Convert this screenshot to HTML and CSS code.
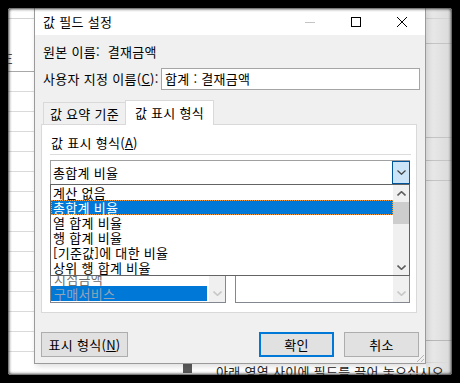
FILE: index.html
```html
<!DOCTYPE html>
<html lang="ko">
<head>
  <meta charset="UTF-8">
  <title>값 필드 설정</title>
  <link rel="stylesheet" href="styles.css">
</head>
<body>

<div class="screen">
  <span class="col-e">E</span>
  <div class="drop-hint"><span class="cell-mark"></span>아래 영역 사이에 필드를 끌어 놓으십시오.</div>

  <div class="dialog">
    <div class="titlebar">
      <span class="title">값 필드 설정</span>
      <div class="caption">
        <span class="cap-btn">
          <svg width="10" height="10" viewBox="0 0 10 10"><path d="M0 5.5H10" stroke="#c4c4c4" stroke-width="1"/></svg>
        </span>
        <span class="cap-btn">
          <svg width="10" height="10" viewBox="0 0 10 10"><rect x="0.5" y="0.5" width="9" height="9" fill="none" stroke="#000" stroke-width="1"/></svg>
        </span>
        <span class="cap-btn">
          <svg width="10" height="10" viewBox="0 0 10 10"><path d="M0 0L10 10M10 0L0 10" stroke="#000" stroke-width="1"/></svg>
        </span>
      </div>
    </div>

    <div class="body">
      <div class="row">원본 이름:&nbsp; 결재금액</div>

      <div class="row name-row">
        <span>사용자 지정 이름(<u>C</u>):</span>
        <div class="textbox">합계 : 결재금액</div>
      </div>

      <div class="tabs">
        <span class="tab">값 요약 기준</span>
        <span class="tab active">값 표시 형식</span>
      </div>

      <div class="panel">
        <div class="group-label">값 표시 형식(<u>A</u>)</div>
        <div class="rule"></div>

        <div class="combo">
          <span class="combo-value">총합계 비율</span>
          <span class="combo-btn">
            <svg width="9" height="5" viewBox="0 0 9 5"><path d="M0.5 0.5L4.5 4.3L8.5 0.5" fill="none" stroke="#444" stroke-width="1.2"/></svg>
          </span>

          <div class="droplist">
            <ul class="options">
              <li>계산 없음</li>
              <li class="selected">총합계 비율</li>
              <li>열 합계 비율</li>
              <li>행 합계 비율</li>
              <li>[기준값]에 대한 비율</li>
              <li>상위 행 합계 비율</li>
            </ul>
            <div class="vscroll">
              <span class="arrow">
                <svg width="9" height="5" viewBox="0 0 9 5"><path d="M0.5 4.5L4.5 0.7L8.5 4.5" fill="none" stroke="#606060" stroke-width="1.6"/></svg>
              </span>
              <div class="thumb"></div>
              <span class="arrow bottom">
                <svg width="9" height="5" viewBox="0 0 9 5"><path d="M0.5 0.5L4.5 4.3L8.5 0.5" fill="none" stroke="#606060" stroke-width="1.6"/></svg>
              </span>
            </div>
          </div>
        </div>

        <div class="lists">
          <div class="listbox left">
            <ul class="items">
              <li>지점금액</li>
              <li class="sel">구매서비스</li>
            </ul>
            <div class="vscroll off">
              <span class="arrow bottom">
                <svg width="9" height="5" viewBox="0 0 9 5"><path d="M0.5 0.5L4.5 4.3L8.5 0.5" fill="none" stroke="#c8c8c8" stroke-width="1.6"/></svg>
              </span>
            </div>
          </div>
          <div class="listbox">
            <ul class="items"></ul>
            <div class="vscroll off">
              <span class="arrow bottom">
                <svg width="9" height="5" viewBox="0 0 9 5"><path d="M0.5 0.5L4.5 4.3L8.5 0.5" fill="none" stroke="#c8c8c8" stroke-width="1.6"/></svg>
              </span>
            </div>
          </div>
        </div>
      </div>

      <div class="buttons">
        <button class="btn wide">표시 형식(<u>N</u>)</button>
        <button class="btn default">확인</button>
        <button class="btn">취소</button>
      </div>
    </div>

    <svg class="grip" width="10" height="10" viewBox="0 0 10 10">
      <path d="M9 2L2 9M9 6L6 9" stroke="#b5b5b5" stroke-width="1"/>
    </svg>
  </div>
</div>

</body>
</html>
```

FILE: styles.css
```css
* { box-sizing: border-box; }

body {
  margin: 0;
  background: #000;
  font-family: "Noto Sans CJK KR", "Noto Sans", sans-serif;
  font-size: 13px;
  letter-spacing: 0.3px;
  color: #000;
}

/* excel sheet behind the dialog */
.screen {
  position: relative;
  margin: 8px;
  width: 444px;
  height: 367px;
  overflow: hidden;
  border-radius: 3px;
  display: flex;
  flex-direction: column;
  background-color: #fff;
  background-image:
    linear-gradient(#d4d4d4, #d4d4d4),
    linear-gradient(#a8a8a8, #a8a8a8),
    repeating-linear-gradient(#fff 0, #fff 19px, #dadada 19px, #dadada 20px),
    linear-gradient(#c4c4c4, #c4c4c4),
    linear-gradient(#c4c4c4, #c4c4c4),
    linear-gradient(#c4c4c4, #c4c4c4),
    linear-gradient(#c4c4c4, #c4c4c4),
    linear-gradient(#b8b8b8, #b8b8b8),
    linear-gradient(to right, #ededed, #d9d9d9);
  background-size:
    444px 1px, 26px 1px, 26px 300px,
    26px 1px, 26px 1px, 26px 1px, 26px 1px, 26px 1px,
    26px 367px;
  background-position:
    0 10px, 0 63px, 0 44px,
    418px 35px, 418px 129px, 418px 152px, 418px 172px, 418px 332px,
    418px 0;
  background-repeat: no-repeat;
}

.screen::after {
  content: "";
  position: absolute;
  inset: 0;
  box-shadow: inset 0 0 3px 1px #333;
  border-radius: 3px;
  z-index: 20;
  pointer-events: none;
}

.col-e {
  margin: 44px 0 0 -3px;
  line-height: 14px;
  color: #444;
}

.drop-hint {
  margin: auto 0 0 170px;
  height: 13px;
  line-height: 17px;
  white-space: nowrap;
  color: #222;
  border-top: 1px solid #dadada;
}

.cell-mark {
  display: inline-block;
  width: 9px;
  height: 10px;
  background: #5a5a5a;
  margin: 0 24px 0 5px;
  vertical-align: top;
}

/* dialog */
.dialog {
  position: absolute;
  left: 26px;
  top: -1px;
  width: 392px;
  height: 357px;
  border: 1px solid #9a9a9a;
  background: #f0f0f0;
  z-index: 2;
  box-shadow: 2px 2px 6px rgba(0, 0, 0, 0.15);
}

.titlebar {
  height: 27px;
  background: #fff;
  display: flex;
  align-items: center;
}

.title {
  padding-left: 8px;
  line-height: 27px;
}

.caption {
  margin-left: auto;
  display: flex;
}

.cap-btn {
  width: 46px;
  height: 27px;
  display: flex;
  align-items: center;
  justify-content: center;
}

.body {
  padding: 0 6px;
}

.row {
  padding-left: 2px;
  margin-top: 8px;
  line-height: 18px;
  height: 18px;
}

.name-row {
  margin-top: 7px;
  height: 22px;
  display: flex;
  align-items: center;
  justify-content: space-between;
}

.textbox {
  width: 259px;
  height: 22px;
  margin-right: -1px;
  background: #fff;
  border: 1px solid #a5a5a5;
  padding-left: 3px;
  line-height: 20px;
}

.tabs {
  margin-top: 10px;
  padding-left: 2px;
  height: 24px;
  display: flex;
  align-items: flex-end;
  position: relative;
  z-index: 1;
}

.tab {
  width: 82px;
  height: 22px;
  line-height: 21px;
  text-align: center;
  border: 1px solid #d9d9d9;
  border-bottom: none;
  border-right: none;
}

.tab.active {
  width: 89px;
  height: 25px;
  margin-bottom: -1px;
  background: #fff;
  border-right: 1px solid #d9d9d9;
  line-height: 24px;
}

.panel {
  width: 376px;
  height: 189px;
  background: #fff;
  border: 1px solid #d9d9d9;
  padding: 10px 6px 0 8px;
}

.group-label {
  padding-left: 1px;
  line-height: 16px;
  height: 16px;
}

.rule {
  margin: 3px -1px 0 0;
  height: 1px;
  background: #dcdcdc;
}

.combo {
  position: relative;
  margin-top: 5px;
  height: 25px;
  border: 1px solid #a0a0a0;
  display: flex;
  align-items: center;
}

.combo-value {
  padding-left: 2px;
  line-height: 22px;
}

.combo-btn {
  margin-left: auto;
  margin-right: -1px;
  align-self: flex-start;
  width: 18px;
  height: 23px;
  background: #cce4f7;
  border: 1px solid #005499;
  display: flex;
  align-items: center;
  justify-content: center;
}

.droplist {
  position: absolute;
  left: -1px;
  right: -1px;
  top: 23px;
  height: 92px;
  background: #fff;
  border: 1px solid #646464;
  display: flex;
  z-index: 5;
}

.options {
  list-style: none;
  margin: 0;
  padding: 0;
  flex: 1;
}

.options li {
  height: 15px;
  line-height: 15px;
  padding-left: 2px;
  white-space: nowrap;
}

.options li.selected {
  background: #0078d7;
  color: #fff;
  outline: 1px dotted #f39a3c;
  outline-offset: -1px;
}

.vscroll {
  width: 16px;
  background: #f0f0f0;
  display: flex;
  flex-direction: column;
  align-items: center;
}

.arrow {
  height: 16px;
  width: 16px;
  display: flex;
  align-items: center;
  justify-content: center;
}

.arrow.bottom {
  margin-top: auto;
}

.thumb {
  width: 16px;
  height: 22px;
  background: #cdcdcd;
  margin-top: 1px;
}

.lists {
  margin-top: 25px;
  height: 93px;
  display: flex;
  gap: 9px;
}

.listbox {
  width: 175px;
  border: 1px solid #828790;
  background: #fff;
  display: flex;
}

.listbox.left {
  width: 176px;
}

.items {
  list-style: none;
  margin: 0;
  padding: 0 2px 1px 0;
  flex: 1;
  display: flex;
  flex-direction: column;
  justify-content: flex-end;
}

.items li {
  height: 15px;
  line-height: 15px;
  padding-left: 3px;
  color: #6d6d6d;
}

.items li.sel {
  background: #0078d7;
  color: #93a4b6;
}

.vscroll.off .arrow {
  height: 18px;
}

.buttons {
  margin-top: 19px;
  display: flex;
  gap: 10px;
}

.btn {
  width: 75px;
  height: 25px;
  padding: 0;
  font-family: inherit;
  font-size: 13px;
  letter-spacing: 0.3px;
  color: #000;
  background: #e1e1e1;
  border: 1px solid #adadad;
}

.btn.wide {
  width: 87px;
  margin-right: auto;
}

.btn.default {
  border: 2px solid #0078d7;
}

.grip {
  position: absolute;
  right: 0;
  bottom: 0;
}
```
